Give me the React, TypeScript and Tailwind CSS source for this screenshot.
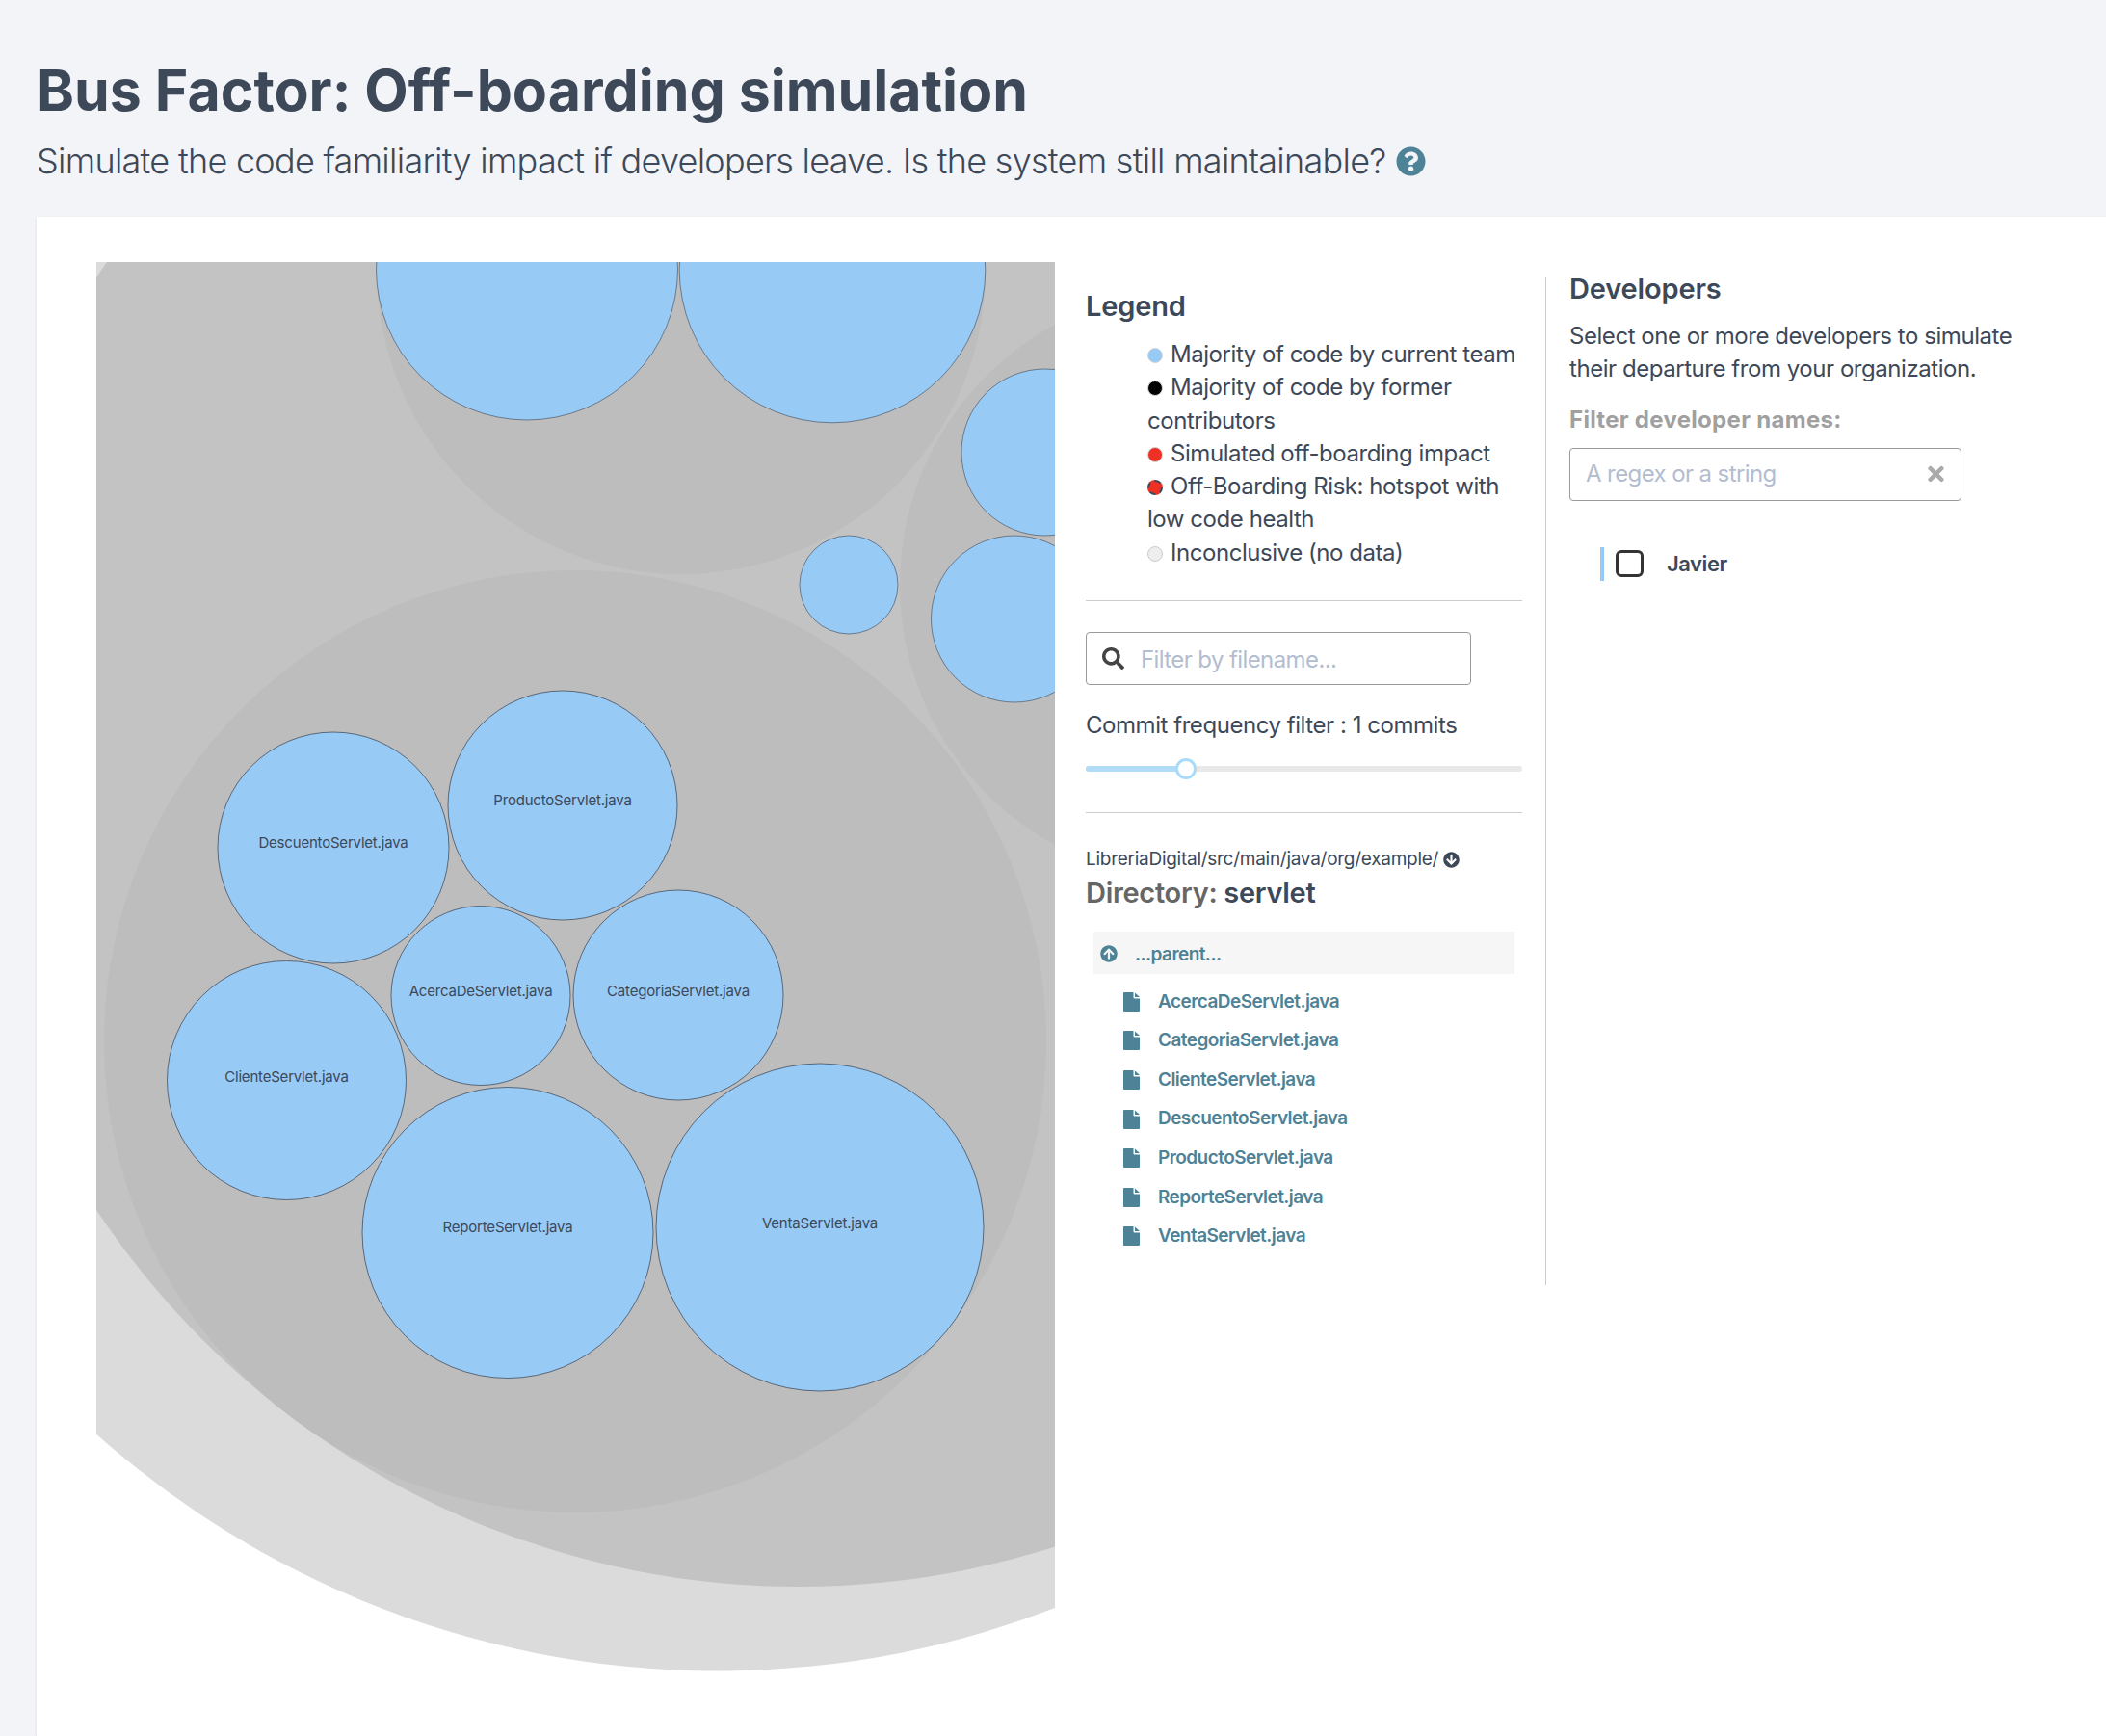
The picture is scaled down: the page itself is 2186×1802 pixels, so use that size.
import { FaArrowCircleDown, FaArrowCircleUp, FaQuestionCircle, FaSearch, FaTimes } from 'react-icons/fa';

const leaves = [
  { name: 'AcercaDeServlet.java', cx: 499, cy: 1033.5, r: 93, ty: 1029 },
  { name: 'CategoriaServlet.java', cx: 704, cy: 1033, r: 109, ty: 1029 },
  { name: 'ClienteServlet.java', cx: 297.5, cy: 1121.5, r: 124, ty: 1118 },
  { name: 'DescuentoServlet.java', cx: 346, cy: 880, r: 120, ty: 875 },
  { name: 'ProductoServlet.java', cx: 584, cy: 836, r: 119, ty: 831 },
  { name: 'ReporteServlet.java', cx: 527, cy: 1279.5, r: 151, ty: 1274 },
  { name: 'VentaServlet.java', cx: 851, cy: 1274, r: 170, ty: 1270 },
];

// leaves from neighbouring folders, no labels at this zoom
const otherLeaves = [
  { cx: 547, cy: 279.5, r: 156.5 },
  { cx: 864, cy: 280, r: 158.8 },
  { cx: 1084.5, cy: 469.5, r: 86.5 },
  { cx: 1053, cy: 642.5, r: 86.5 },
  { cx: 881, cy: 607, r: 51 },
];

const legend = [
  { label: 'Majority of code by current team', dot: 'bg-[#97caf5] border border-[#d5d5d5]' },
  { label: 'Majority of code by former contributors', dot: 'bg-black border border-[#d5d5d5]' },
  { label: 'Simulated off-boarding impact', dot: 'bg-[#ee3124] border border-[#d5d5d5]' },
  { label: 'Off-Boarding Risk: hotspot with low code health', dot: 'bg-[#ee3124] border-2 border-[#3d4859] border-dashed' },
  { label: 'Inconclusive (no data)', dot: 'bg-[#eeeeee] border border-[#cccccc]' },
];

function FileIcon() {
  return (
    <svg viewBox="0 0 17 20" className="w-[17px] h-[20px] shrink-0" fill="currentColor">
      <path d="M1 0h9.5v5.5a1 1 0 0 0 1 1H17V19a1 1 0 0 1-1 1H1a1 1 0 0 1-1-1V1a1 1 0 0 1 1-1z" />
      <path d="M12 0.5l5 4.5h-5z" />
    </svg>
  );
}

function PackChart() {
  return (
    <svg viewBox="100 272 995 1480" className="w-[995px] h-[1480px] shrink-0 block overflow-hidden">
      <circle cx={745} cy={765.5} r={969} fill="#dbdbdb" />
      <circle cx={829} cy={772} r={875} fill="#c3c3c3" />
      <circle cx={707} cy={280} r={316} fill="#bdbdbd" />
      <circle cx={1241} cy={607} r={307} fill="#bdbdbd" />
      <circle cx={597} cy={1081} r={489} fill="#bdbdbd" />
      {otherLeaves.map((c) => (
        <circle key={`${c.cx}-${c.cy}`} cx={c.cx} cy={c.cy} r={c.r} fill="#97caf5" stroke="#3d4859" strokeOpacity={0.6} />
      ))}
      {leaves.map((c) => (
        <g key={c.name}>
          <circle cx={c.cx} cy={c.cy} r={c.r} fill="#97caf5" stroke="#3d4859" strokeOpacity={0.75} />
          <text x={c.cx} y={c.ty + 5} textAnchor="middle" fontSize={15} letterSpacing={-0.2} fill="#3d4859">
            {c.name}
          </text>
        </g>
      ))}
    </svg>
  );
}

export default function App() {
  return (
    <div className="min-h-[1802px] bg-[#f2f4f8] text-[#3d4859] font-['Inter',sans-serif] tracking-[-0.45px] overflow-hidden flex flex-col">
      <header className="px-[38px] pt-[58px]">
        <h1 className="text-[59px] leading-[72px] font-bold tracking-[0px]">Bus Factor: Off-boarding simulation</h1>
        <p className="mt-[14px] flex items-center text-[36px] leading-[46px] font-light tracking-[-0.72px]">
          Simulate the code familiarity impact if developers leave. Is the system still maintainable?
          <FaQuestionCircle className="ml-[10px] w-[31px] h-[31px] text-[#4e8296]" />
        </p>
      </header>

      <main className="ml-[38px] mt-[35px] flex-1 bg-white shadow-sm flex pl-[62px] pt-[47px]">
        <PackChart />

        <section className="ml-[32px] w-[453px] shrink-0">
          <h2 className="mt-[25px] text-[29px] leading-[42px] font-semibold tracking-[-0.15px]">Legend</h2>
          <ul className="mt-[12px] pl-[64px] text-[24px] leading-[34.3px]">
            {legend.map((item) => (
              <li key={item.label}>
                <span className={`inline-block w-[16px] h-[16px] rounded-full mr-[8px] align-[-1px] ${item.dot}`} />
                {item.label}
              </li>
            ))}
          </ul>
          <hr className="mt-[32px] border-[#cccccc]" />

          <div className="mt-[32px] w-[400px] h-[55px] border border-[#999999] rounded-[4px] flex items-center pl-[16px]">
            <FaSearch className="w-[23px] h-[23px] text-[#444444]" />
            <input
              placeholder="Filter by filename..."
              className="ml-[17px] pt-[2px] flex-1 min-w-0 text-[24px] tracking-[-0.6px] outline-none placeholder:text-[#b3bdd0]"
            />
          </div>

          <p className="mt-[25px] text-[24px] leading-[34px]">Commit frequency filter : 1 commits</p>
          <div className="relative mt-[25px] h-[6px] rounded-full bg-[#e9e9e9]">
            <div className="h-full w-[104px] rounded-full bg-[#b0dcf7]" />
            <div className="absolute left-[93px] top-[-8px] w-[22px] h-[22px] rounded-full bg-white border-[3px] border-[#a8dbf9]" />
          </div>
          <hr className="mt-[42px] border-[#cccccc]" />

          <p className="mt-[35px] flex items-center gap-[5px] text-[19px] leading-[26px] tracking-[-0.27px]">
            LibreriaDigital/src/main/java/org/example/
            <FaArrowCircleDown className="w-[17px] h-[17px]" />
          </p>
          <h3 className="mt-[2px] text-[29px] leading-[40px] font-semibold tracking-[-0.3px] text-[#666666]">
            Directory: <span className="text-[#3d4859]">servlet</span>
          </h3>

          <ul className="mt-[20px] mx-[8px] text-[19px] font-semibold tracking-[-0.55px] text-[#4e8296]">
            <li className="h-[44px] bg-[#f6f6f6] flex items-center pl-[7px]">
              <FaArrowCircleUp className="w-[18px] h-[18px] mt-[2px]" />
              <span className="ml-[18px] mt-[5px]">...parent...</span>
            </li>
            <div className="mt-[8.5px]">
              {leaves.map((f) => (
                <li key={f.name} className="h-[40.6px] flex items-center pl-[31px]">
                  <FileIcon />
                  <span className="ml-[19px]">{f.name}</span>
                </li>
              ))}
            </div>
          </ul>
        </section>

        <aside className="ml-[24px] w-[520px] h-[1046px] mt-[16px] border-l border-[#cccccc] pl-[24px]">
          <h2 className="text-[29px] leading-[24px] font-semibold tracking-[-0.15px]">Developers</h2>
          <p className="mt-[20px] w-[480px] text-[24px] leading-[34.3px]">
            Select one or more developers to simulate their departure from your organization.
          </p>
          <p className="mt-[18px] text-[24px] leading-[34px] font-bold tracking-[0.3px] text-[#a0a0a0]">Filter developer names:</p>
          <div className="mt-[12px] w-[407px] h-[55px] border border-[#999999] rounded-[4px] flex items-center pl-[16px] pr-[17px]">
            <input
              placeholder="A regex or a string"
              className="flex-1 min-w-0 text-[24px] tracking-[-0.6px] outline-none placeholder:text-[#b3bdd0]"
            />
            <FaTimes className="w-[17px] h-[24px] text-[#aaaaaa]" />
          </div>
          <div className="mt-[48px] ml-[32px] flex items-center border-l-[4px] border-[#97caf5] h-[35px] pl-[12px]">
            <span className="w-[29px] h-[28px] border-[3px] border-[#333333] rounded-[6px]" />
            <span className="ml-[24px] text-[22px] font-semibold">Javier</span>
          </div>
        </aside>
      </main>
    </div>
  );
}
